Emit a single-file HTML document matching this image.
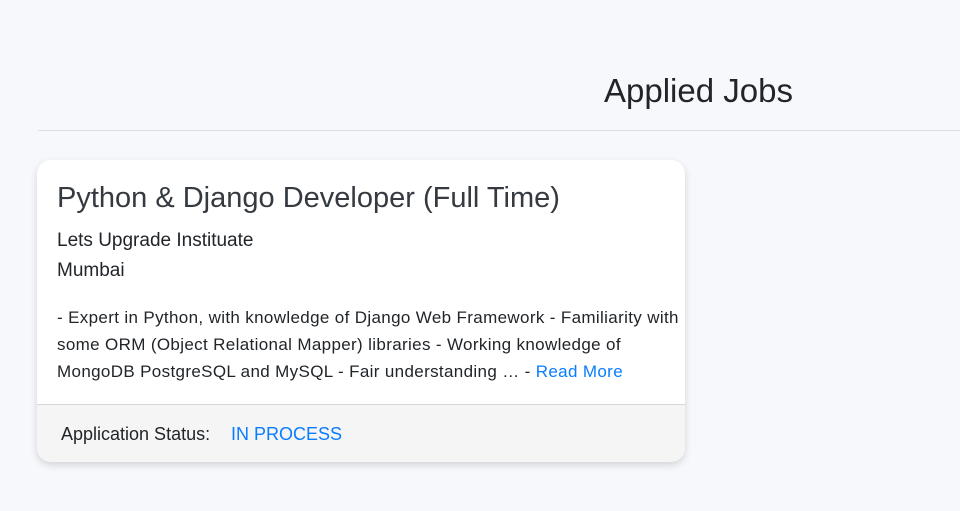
<!DOCTYPE html>
<html><head><style>
body{margin:0;width:960px;height:511px;background:#f7f8fc;font-family:"Liberation Sans",sans-serif;color:#2b2f33;overflow:hidden;position:relative}
h1{position:absolute;left:604px;top:72px;margin:0;font-size:33px;font-weight:normal;color:#212529;letter-spacing:0px}
.hr{position:absolute;left:38px;right:0;top:130px;height:1px;background:#dcdde0}
.card{position:absolute;left:37px;top:160px;width:648px;height:302px;background:#fff;border-radius:14px;box-shadow:0 3px 8px rgba(0,0,0,.15);overflow:hidden}
.t{position:absolute;left:20px;top:22px;font-size:29px;color:#343a40;white-space:nowrap}
.c{position:absolute;left:20px;top:66px;font-size:19px;line-height:30px;color:#212529;letter-spacing:0px}
.d{position:absolute;left:20px;top:144px;width:660px;font-size:17px;line-height:27px;color:#212529;letter-spacing:0.35px;white-space:nowrap}
a{color:#0a7cff;text-decoration:none}
.f{position:absolute;left:0;right:0;top:244px;bottom:0;background:#f5f5f5;border-top:1px solid #d6d6d6}
.f span{position:absolute;top:19px;font-size:18px;color:#212529}
</style></head><body>
<h1>Applied Jobs</h1>
<div class="hr"></div>
<div class="card">
<div class="t">Python &amp; Django Developer (Full Time)</div>
<div class="c">Lets Upgrade Instituate<br>Mumbai</div>
<div class="d">- Expert in Python, with knowledge of Django Web Framework - Familiarity with<br>some ORM (Object Relational Mapper) libraries - Working knowledge of<br>MongoDB PostgreSQL and MySQL - Fair understanding … - <a>Read More</a></div>
<div class="f"><span style="left:24px">Application Status:</span><span style="left:194px;color:#0a7cff">IN PROCESS</span></div>
</div>
</body></html>
